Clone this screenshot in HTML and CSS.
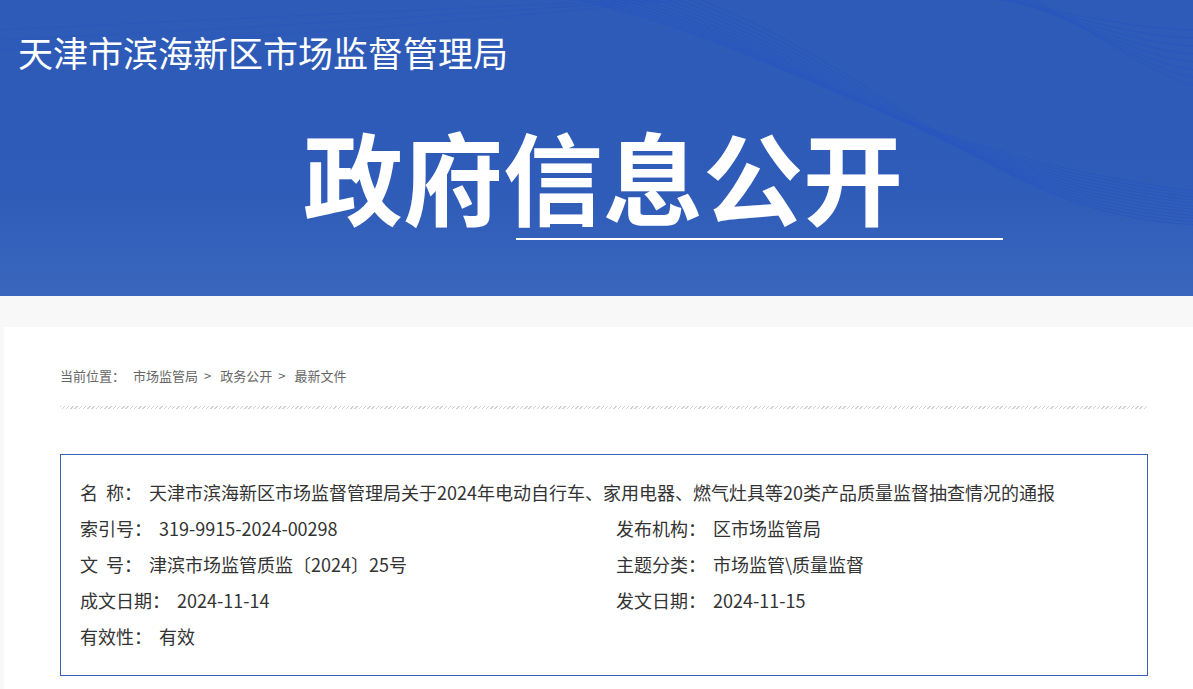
FILE: index.html
```html
<!DOCTYPE html>
<html lang="zh-CN">
<head>
<meta charset="utf-8">
<title>政府信息公开 - 天津市滨海新区市场监督管理局</title>
<link rel="stylesheet" href="styles.css">
</head>
<body>
<header class="banner">
  <svg class="waves" viewBox="0 0 1193 296" preserveAspectRatio="none" aria-hidden="true">
    <g class="bundle-a">
      <path d="M560 -4 C780 40 880 150 1200 192"/>
      <path d="M572 -4 C792 44 890 156 1200 195"/>
      <path d="M584 -4 C804 48 900 162 1200 198"/>
      <path d="M596 -4 C816 52 910 168 1200 201"/>
      <path d="M608 -4 C828 56 920 174 1200 204"/>
      <path d="M620 -4 C840 60 930 180 1200 207"/>
      <path d="M632 -4 C852 64 940 186 1200 210"/>
      <path d="M644 -4 C864 68 950 192 1200 213"/>
      <path d="M656 -4 C876 72 960 198 1200 216"/>
      <path d="M668 -4 C888 76 970 204 1200 219"/>
      <path d="M680 -4 C900 80 980 210 1200 222"/>
      <path d="M692 -4 C912 84 990 216 1200 225"/>
    </g>
    <g class="bundle-b">
      <path d="M990 -2 C1060 10 1130 30 1200 30"/>
      <path d="M996 -2 C1066 14 1136 38 1200 38"/>
      <path d="M1002 -2 C1072 18 1142 46 1200 46"/>
      <path d="M1008 -2 C1078 22 1148 54 1200 54"/>
      <path d="M1014 -2 C1084 26 1154 62 1200 62"/>
      <path d="M1020 -2 C1090 30 1160 70 1200 70"/>
      <path d="M1026 -2 C1096 34 1166 78 1200 78"/>
      <path d="M1032 -2 C1102 38 1172 86 1200 86"/>
    </g>
    <g class="bundle-c">
      <path d="M0 30 C200 20 420 10 640 0"/>
      <path d="M0 40 C220 30 440 16 660 0"/>
      <path d="M0 50 C240 40 460 22 680 0"/>
    </g>
  </svg>
  <div class="site-name">天津市滨海新区市场监督管理局</div>
  <h1 class="page-heading">政府信息公开</h1>
  <div class="heading-rule"></div>
</header>

<main class="page">
  <div class="container">
    <nav class="crumbs"><span class="crumb-label">当前位置：</span><a class="crumb" href="#">市场监管局</a><span class="sep">&gt;</span><a class="crumb" href="#">政务公开</a><span class="sep">&gt;</span><a class="crumb" href="#">最新文件</a></nav>
    <div class="dots"></div>

    <section class="meta">
      <div class="row full">
        <span class="label">名&nbsp;&nbsp;称：</span><span class="value">天津市滨海新区市场监督管理局关于2024年电动自行车、家用电器、燃气灶具等20类产品质量监督抽查情况的通报</span>
      </div>
      <div class="row"><span class="label">索引号：</span><span class="value">319-9915-2024-00298</span></div>
      <div class="row"><span class="label">发布机构：</span><span class="value">区市场监管局</span></div>
      <div class="row"><span class="label">文&nbsp;&nbsp;号：</span><span class="value">津滨市场监管质监〔2024〕25号</span></div>
      <div class="row"><span class="label">主题分类：</span><span class="value">市场监管\质量监督</span></div>
      <div class="row"><span class="label">成文日期：</span><span class="value">2024-11-14</span></div>
      <div class="row"><span class="label">发文日期：</span><span class="value">2024-11-15</span></div>
      <div class="row full"><span class="label">有效性：</span><span class="value">有效</span></div>
    </section>
  </div>
</main>
</body>
</html>
```

FILE: styles.css
```css
html, body {
  margin: 0;
  padding: 0;
}
body {
  background: #f8f8f8;
  font-family: "Noto Sans CJK SC", "Noto Sans", "Liberation Sans", sans-serif;
  color: #333;
}

.banner {
  position: relative;
  height: 296px;
  overflow: hidden;
  background: linear-gradient(180deg, #2e5ab8 0%, #2f5cb8 65%, #3a66bd 100%);
  color: #fff;
  box-sizing: border-box;
  padding-top: 31px;
}
.waves {
  position: absolute;
  left: 0;
  top: 0;
  width: 100%;
  height: 100%;
}
.waves path {
  fill: none;
  stroke: #2452c6;
  stroke-width: 1;
}
.bundle-a { opacity: 0.55; }
.bundle-b { opacity: 0.45; }
.bundle-c { opacity: 0.25; }

.site-name {
  position: relative;
  margin-left: 18px;
  font-size: 35px;
  line-height: 42px;
  font-weight: 400;
}
.page-heading {
  position: relative;
  margin: 52px 0 0 303px;
  font-size: 100px;
  line-height: 100px;
  font-weight: 700;
}
.heading-rule {
  position: relative;
  margin: 13px 0 0 516px;
  width: 487px;
  height: 2px;
  background: #fff;
}

.page {
  padding-top: 31px;
}
.container {
  margin-left: 4px;
  background: #fff;
  padding: 39px 0 14px 56px;
  min-height: 340px;
}
.crumbs {
  font-size: 13px;
  line-height: 20px;
  color: #666;
}
.crumb-label { margin-right: 8px; }
.crumb {
  color: #666;
  text-decoration: none;
}
.sep {
  margin: 0 9px 0 6px;
}
.dots {
  margin-top: 20px;
  width: 1088px;
  height: 3px;
  background: repeating-linear-gradient(135deg, #d2d2d2 0 1px, #ffffff 1px 3px);
}

.meta {
  margin-top: 45px;
  width: 1088px;
  box-sizing: border-box;
  border: 1px solid #3862b7;
  padding: 19px 19px 21px;
  display: grid;
  grid-template-columns: 536px 1fr;
  font-size: 18px;
  line-height: 36px;
}
.row {
  white-space: nowrap;
}
.row.full {
  grid-column: 1 / -1;
}
.label {
  margin-right: 7px;
}
```
